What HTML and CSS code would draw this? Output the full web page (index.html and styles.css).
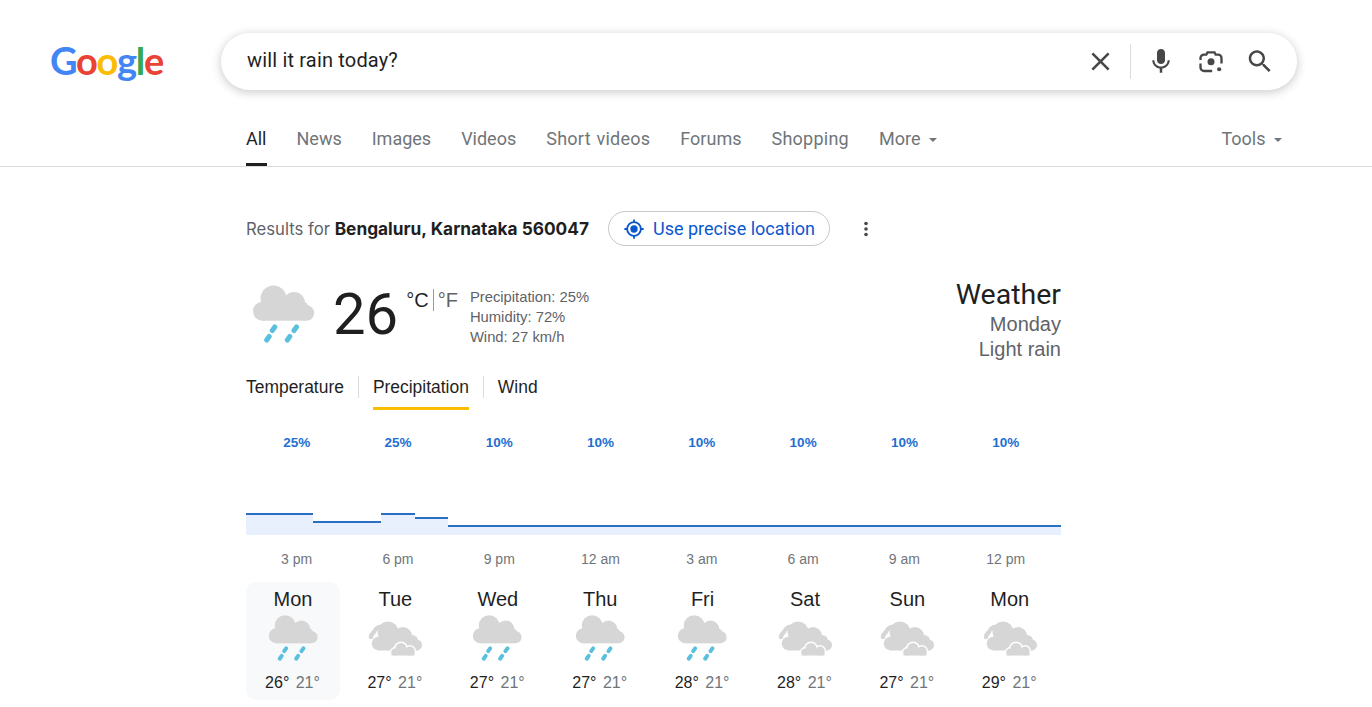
FILE: index.html
```html
<!DOCTYPE html>
<html lang="en">
<head>
  <meta charset="UTF-8">
  <title>will it rain today? - Google Search</title>
  <link rel="stylesheet" href="styles.css">
</head>
<body>
  <svg class="defs" width="0" height="0">
    <symbol id="cloud-rain" viewBox="0 0 64 62">
      <g fill="#d6d6d6">
        <circle cx="10.500" cy="28.200" r="9.500"/>
        <circle cx="21.500" cy="15.500" r="13"/>
        <circle cx="42" cy="20" r="11"/>
        <circle cx="49" cy="26" r="8"/>
        <circle cx="54.500" cy="30" r="7.700"/>
        <rect x="10" y="20" width="44" height="17.700"/>
      </g>
      <g fill="none" stroke="#5bc0de" stroke-width="5" stroke-linecap="round">
        <path d="M20.300 47.500L22.800 44M14.700 57L17.200 53.500"/>
        <path d="M42 47.500L44.500 44M35.300 57L37.800 53.500"/>
      </g>
    </symbol>
    <symbol id="cloud-sun" viewBox="0 0 54 50">
      <path fill="none" stroke="#d6d6d6" stroke-width="4.500" stroke-linecap="round" d="M3 24C3 21.500 4.500 20.500 6 19M7.500 16.500C8.500 15 10 14.500 11 14"/>
      <g fill="#d6d6d6">
        <circle cx="10.500" cy="30.500" r="6.800"/>
        <circle cx="20" cy="19" r="10.500"/>
        <circle cx="35" cy="23" r="9"/>
        <circle cx="44" cy="28" r="6"/>
        <circle cx="48.500" cy="32" r="5.500"/>
        <rect x="10" y="24" width="39" height="13.500"/>
      </g>
      <g fill="#fff">
        <circle cx="27" cy="39" r="5"/>
        <circle cx="33" cy="35.500" r="7"/>
        <circle cx="42" cy="38" r="6"/>
      </g>
      <g fill="#d6d6d6">
        <circle cx="27" cy="39" r="3.500"/>
        <circle cx="33" cy="35.500" r="5.500"/>
        <circle cx="42" cy="38" r="4.500"/>
        <rect x="23.500" y="38" width="23" height="4.500"/>
      </g>
    </symbol>
  </svg>

  <header class="top">
    <div class="logo"><span class="c-blue">G</span><span class="c-red">o</span><span class="c-yellow">o</span><span class="c-blue">g</span><span class="c-green">l</span><span class="c-red">e</span></div>
    <div class="searchbox">
      <span class="query">will it rain today?</span>
      <div class="search-icons">
        <span class="ico-box"><svg viewBox="0 0 24 24" width="31" height="31"><path fill="#474747" d="M19 6.410 17.590 5 12 10.590 6.410 5 5 6.410 10.590 12 5 17.590 6.410 19 12 13.410 17.590 19 19 17.590 13.410 12z"/></svg></span>
        <span class="sep"></span>
        <span class="ico-box"><svg viewBox="0 1.500 24 24" width="30" height="30"><path fill="#474747" d="M12 15c1.800 0 3.200-1.300 3.200-3V6c0-1.700-1.400-3-3.200-3S8.800 4.300 8.800 6v6c0 1.700 1.400 3 3.200 3z"/><path fill="#474747" d="M17.300 12c0 3-2.500 5-5.300 5s-5.300-2-5.300-5H5c0 3.400 2.700 6.200 6 6.700V22h2v-3.300c3.300-.5 6-3.300 6-6.700z"/></svg></span>
        <span class="ico-box"><svg viewBox="0 0.800 24 24" width="28" height="28"><circle cx="12" cy="12.500" r="3" fill="#474747"/><circle cx="19" cy="19" r="1.800" fill="#474747"/><path fill="none" stroke="#474747" stroke-width="2" d="M3 11V9.500A3 3 0 0 1 6 6.500H8L9 4.500h6l1 2h2A3 3 0 0 1 21 9.500V14M3 14v3.500a3 3 0 0 0 3 3h7"/></svg></span>
        <span class="ico-box"><svg viewBox="0.800 0.500 24 24" width="30" height="30"><path fill="#474747" d="M15.500 14h-.8l-.3-.3c1-1.100 1.600-2.600 1.600-4.200C16 5.900 13.100 3 9.500 3S3 5.900 3 9.500 5.900 16 9.500 16c1.600 0 3.100-.6 4.200-1.600l.3.300v.8l5 5 1.500-1.500-5-5zm-6 0C7 14 5 12 5 9.500S7 5 9.500 5 14 7 14 9.500 12 14 9.500 14z"/></svg></span>
      </div>
    </div>
  </header>

  <nav class="tabs">
    <div class="tab-list">
      <a class="tab active">All</a>
      <a class="tab">News</a>
      <a class="tab">Images</a>
      <a class="tab">Videos</a>
      <a class="tab tab-wide">Short videos</a>
      <a class="tab">Forums</a>
      <a class="tab tab-wide">Shopping</a>
      <a class="tab">More <i class="caret"></i></a>
    </div>
    <a class="tab tools">Tools <i class="caret"></i></a>
  </nav>

  <main class="results">
    <div class="location">
      <span class="loc-text">Results for <b>Bengaluru, Karnataka 560047</b></span>
      <a class="precise">
        <svg viewBox="0 0 24 24" width="22" height="22"><circle cx="12" cy="12" r="4" fill="#0b57d0"/><circle cx="12" cy="12" r="7.500" fill="none" stroke="#0b57d0" stroke-width="2"/><path stroke="#0b57d0" stroke-width="2" d="M12 1.500v3M12 19.500v3M1.500 12h3M19.500 12h3"/></svg>
        Use precise location
      </a>
      <svg class="dots" viewBox="0 0 4 16" width="4" height="16"><circle cx="2" cy="2.500" r="1.800"/><circle cx="2" cy="8" r="1.800"/><circle cx="2" cy="13.500" r="1.800"/></svg>
    </div>

    <section class="weather">
      <div class="now">
        <div class="now-left">
          <svg class="now-icon" width="64" height="62"><use href="#cloud-rain"/></svg>
          <span class="temp">26</span>
          <span class="units"><span class="unit-c">°C</span><span class="unit-f">°F</span></span>
          <div class="details">
            <div>Precipitation: 25%</div>
            <div>Humidity: 72%</div>
            <div>Wind: 27 km/h</div>
          </div>
        </div>
        <div class="now-right">
          <div class="w-title">Weather</div>
          <div class="w-sub">Monday</div>
          <div class="w-sub">Light rain</div>
        </div>
      </div>

      <div class="modes">
        <span class="mode">Temperature</span>
        <span class="mode selected">Precipitation</span>
        <span class="mode">Wind</span>
      </div>

      <div class="pct-row">
        <span>25%</span><span>25%</span><span>10%</span><span>10%</span>
        <span>10%</span><span>10%</span><span>10%</span><span>10%</span>
      </div>
      <svg class="chart" width="815" height="35" viewBox="0 0 815 35">
        <path fill="#e8f0fe" d="M0 14H67V22H135V14H169V18H202V26H815V35H0z"/>
        <path fill="none" stroke="#2a6fc4" stroke-width="2" d="M0 14H67M67 22H135M135 14H169M169 18H202M202 26H815"/>
      </svg>
      <div class="time-row">
        <span>3 pm</span><span>6 pm</span><span>9 pm</span><span>12 am</span>
        <span>3 am</span><span>6 am</span><span>9 am</span><span>12 pm</span>
      </div>

      <div class="days">
        <div class="day current">
          <div class="day-name">Mon</div>
          <svg class="day-icon" width="51" height="50"><use href="#cloud-rain"/></svg>
          <div class="day-temp">26° <span>21°</span></div>
        </div>
        <div class="day">
          <div class="day-name">Tue</div>
          <svg class="day-icon" width="54" height="50"><use href="#cloud-sun"/></svg>
          <div class="day-temp">27° <span>21°</span></div>
        </div>
        <div class="day">
          <div class="day-name">Wed</div>
          <svg class="day-icon" width="51" height="50"><use href="#cloud-rain"/></svg>
          <div class="day-temp">27° <span>21°</span></div>
        </div>
        <div class="day">
          <div class="day-name">Thu</div>
          <svg class="day-icon" width="51" height="50"><use href="#cloud-rain"/></svg>
          <div class="day-temp">27° <span>21°</span></div>
        </div>
        <div class="day">
          <div class="day-name">Fri</div>
          <svg class="day-icon" width="51" height="50"><use href="#cloud-rain"/></svg>
          <div class="day-temp">28° <span>21°</span></div>
        </div>
        <div class="day">
          <div class="day-name">Sat</div>
          <svg class="day-icon" width="54" height="50"><use href="#cloud-sun"/></svg>
          <div class="day-temp">28° <span>21°</span></div>
        </div>
        <div class="day">
          <div class="day-name">Sun</div>
          <svg class="day-icon" width="54" height="50"><use href="#cloud-sun"/></svg>
          <div class="day-temp">27° <span>21°</span></div>
        </div>
        <div class="day">
          <div class="day-name">Mon</div>
          <svg class="day-icon" width="54" height="50"><use href="#cloud-sun"/></svg>
          <div class="day-temp">29° <span>21°</span></div>
        </div>
      </div>
    </section>
  </main>
</body>
</html>
```

FILE: styles.css
```css
html, body {
  margin: 0;
  padding: 0;
  height: 707px;
  overflow: hidden;
  background: #fff;
  font-family: "Liberation Sans", Arial, sans-serif;
  color: #1f1f1f;
}
.defs { display: block; height: 0; }

/* header */
.top {
  display: flex;
  align-items: center;
  padding: 33px 75px 0 50px;
}
.logo {
  width: 171px;
  font-family: "Lato", sans-serif;
  font-size: 38px;
  line-height: 55px;
  height: 57px;
  letter-spacing: -1.300px;
  font-weight: 700;
}
.c-blue { color: #4285f4; }
.c-red { color: #ea4335; }
.c-yellow { color: #fbbc05; }
.c-green { color: #34a853; }
.searchbox {
  flex: 1;
  height: 57px;
  border-radius: 29px;
  background: #fff;
  box-shadow: 0 2px 8px 1px rgba(64,60,67,0.24);
  display: flex;
  align-items: center;
  justify-content: space-between;
  padding: 0 11px 0 26px;
}
.query {
  font-family: "Roboto", sans-serif;
  font-size: 20px;
  letter-spacing: 0.17px;
  color: #1f1f1f;
  margin-bottom: 4px;
}
.search-icons {
  display: flex;
  align-items: center;
}
.ico-box {
  width: 50px;
  height: 32px;
  display: flex;
  align-items: center;
  justify-content: center;
}
.sep {
  width: 1px;
  height: 35px;
  background: #dadce0;
  margin: 0 5px;
}

/* tabs */
.tabs {
  display: flex;
  justify-content: space-between;
  padding: 0 90px 0 246px;
  margin-top: 22px;
  height: 54px;
  border-bottom: 1px solid #dadce0;
}
.tab-list {
  display: flex;
  gap: 30px;
}
.tab {
  font-family: "Roboto", sans-serif;
  font-size: 18px;
  word-spacing: 4px;
  color: #70757a;
  line-height: 54px;
  height: 51px;
  display: block;
  white-space: nowrap;
}
.tab.active {
  color: #1f1f1f;
  border-bottom: 3px solid #1f1f1f;
}
.tab-wide {
  letter-spacing: 0.25px;
  word-spacing: 1px;
}
.caret {
  display: inline-block;
  width: 0;
  height: 0;
  vertical-align: middle;
  border-left: 4.500px solid transparent;
  border-right: 4.500px solid transparent;
  border-top: 4.500px solid #70757a;
}

/* results */
.results {
  padding-left: 246px;
  width: 815px;
}
.location {
  display: flex;
  align-items: center;
  margin-top: 44px;
  height: 35px;
}
.loc-text {
  font-family: "Inter", sans-serif;
  font-size: 16.700px;
  color: #5f6368;
  white-space: nowrap;
}
.loc-text b {
  color: #1f1f1f;
  font-size: 17.300px;
  font-weight: 700;
}
.precise {
  display: flex;
  align-items: center;
  gap: 8px;
  height: 33px;
  margin-left: 19px;
  padding: 0 14px 0 14px;
  border: 1px solid #c7c7c7;
  border-radius: 18px;
  color: #0b57d0;
  font-family: "Roboto", sans-serif;
  font-size: 18px;
  white-space: nowrap;
}
.dots {
  margin-left: 34px;
  fill: #474747;
}

/* weather */
.weather {
  width: 815px;
}
.now {
  display: flex;
  justify-content: space-between;
  margin-top: 32px;
}
.now-left {
  display: flex;
  align-items: flex-start;
}
.now-icon {
  margin: 5px 0 0 6px;
}
.temp {
  font-family: "Roboto", sans-serif;
  font-size: 58px;
  line-height: 72px;
  margin-left: 17px;
}
.units {
  display: flex;
  font-size: 20px;
  margin: 11px 0 0 8px;
  line-height: 22px;
}
.unit-c {
  padding-right: 4px;
  border-right: 1px solid #999;
}
.unit-f {
  padding-left: 4px;
  color: #5f6368;
}
.details {
  margin: 9px 0 0 12px;
  font-size: 14.800px;
  line-height: 20px;
  color: #5f6368;
}
.now-right {
  text-align: right;
}
.w-title {
  font-family: "Roboto", sans-serif;
  font-size: 28.500px;
  line-height: 34px;
}
.w-sub {
  font-size: 20px;
  line-height: 25px;
  color: #5f6368;
}
.modes {
  display: flex;
  margin-top: 14px;
  font-size: 17.450px;
}
.mode {
  padding: 0 14px;
  line-height: 22px;
  height: 22px;
  border-right: 1px solid #dadce0;
  position: relative;
}
.mode:first-child { padding-left: 0; }
.mode:last-child { border-right: none; }
.mode.selected::after {
  content: "";
  position: absolute;
  left: 14px;
  right: 14px;
  top: 31px;
  height: 3px;
  background: #fbbc04;
}
.pct-row, .time-row {
  display: grid;
  grid-template-columns: repeat(8, 101.3px);
  text-align: center;
}
.pct-row {
  margin-top: 37px;
  font-size: 13.500px;
  font-weight: 700;
  line-height: 16px;
  color: #1f6fd1;
}
.chart {
  display: block;
  margin-top: 49px;
}
.time-row {
  margin-top: 16px;
  font-size: 14px;
  line-height: 16px;
  color: #70757a;
}
.days {
  display: grid;
  grid-template-columns: repeat(8, 94px);
  column-gap: 8.400px;
  margin-top: 15px;
}
.day {
  height: 118px;
  border-radius: 10px;
  text-align: center;
  padding-top: 6px;
  box-sizing: border-box;
}
.day.current {
  background: #f8f9fa;
}
.day-name {
  font-size: 20px;
  line-height: 22px;
}
.day-icon {
  display: block;
  margin: 3px auto 0;
}
.day-temp {
  margin-top: 10px;
  padding-right: 1px;
  font-size: 16px;
  line-height: 20px;
}
.day-temp span {
  color: #70757a;
  margin-left: 2px;
}
```
